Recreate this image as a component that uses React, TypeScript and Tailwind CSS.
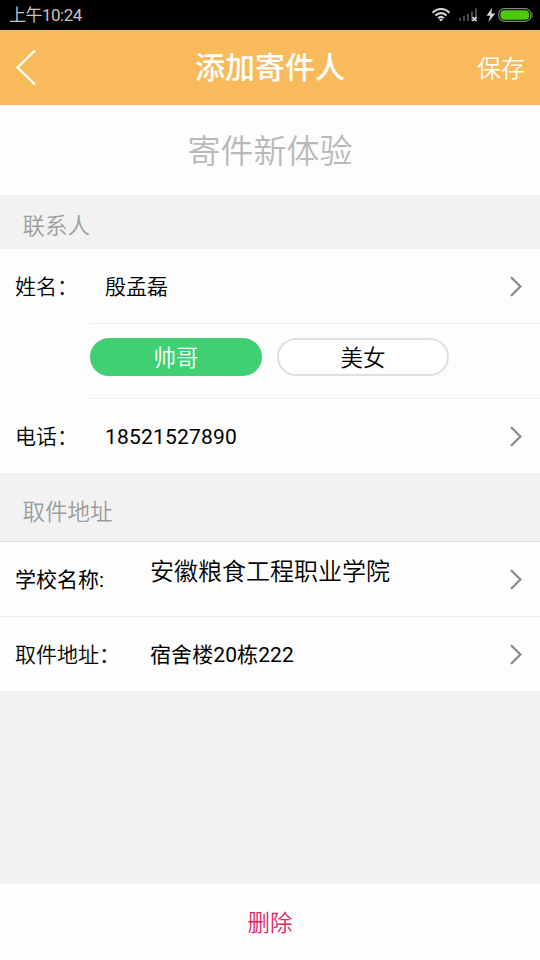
import React, { useState } from "react";

type RowProps = {
  label: string;
  labelClass: string;
  children: React.ReactNode;
};

const Chevron = () => (
  <svg className="h-[22px] w-3.5 shrink-0" viewBox="0 0 14 22" fill="none">
    <path d="M2.6 2.8 11.4 11.5 2.6 20.2" stroke="#8b8b8b" strokeWidth="2.3" strokeLinecap="round" />
  </svg>
);

const StatusBar = () => (
  <div className="flex h-[30px] shrink-0 items-center justify-between bg-black pl-[9px] pr-[6px]">
    <span className="text-[17px] font-normal leading-none tracking-[-0.5px] text-[#c4c4c4]">上午10:24</span>
    <div className="flex h-full items-center">
      {/* wifi */}
      <svg className="h-[30px] w-[22px]" viewBox="0 0 22 30" fill="none" stroke="#d6d6d6" strokeWidth="2.1">
        <path d="M1.6 12.8C6.5 7.8 13.7 7.8 18.4 12.8" />
        <path d="M4.4 15.6C7.7 12.3 12.5 12.3 15.6 15.6" />
        <path d="M7.2 18.2C8.9 16.6 11.2 16.6 12.8 18.2" />
        <path d="M8 19.6C9.2 18.5 10.8 18.5 12 19.6L10 21.6Z" fill="#d6d6d6" stroke="none" />
      </svg>
      {/* no signal */}
      <svg className="ml-1.5 h-[30px] w-[22px]" viewBox="0 0 22 30">
        <path d="M0 18h2v3H0zM4 16h2v5H4zM8 14h2v7H8zM12 11.5h2V21h-2zM16 8.5h2V21h-2z" fill="#4b4b4b" />
        <path d="m13.4 17 4 4m0-4-4 4" stroke="#e6e6e6" strokeWidth="1.5" />
      </svg>
      {/* charging */}
      <svg className="ml-[5px] h-[30px] w-[10px]" viewBox="0 0 10 30">
        <path d="M6.2 7.8.6 15.8h3.6l-1.9 6.4L9.2 13.4H5.3z" fill="#d9d9d9" />
      </svg>
      <svg className="ml-[2px] h-[30px] w-9" viewBox="0 0 36 30">
        <rect x="0.7" y="8.7" width="32.2" height="12.6" rx="5.5" fill="none" stroke="#828282" strokeWidth="1.2" />
        <rect x="2.4" y="10.3" width="28.8" height="9.4" rx="4" fill="#4dc80d" />
        <path d="M34 12.6v4.8" stroke="#777" strokeWidth="1.2" />
      </svg>
    </div>
  </div>
);

const Row = ({ label, labelClass, children }: RowProps) => (
  <div className="flex h-[74px] shrink-0 items-center bg-[#fdfdfd] pl-[15px] pr-[17px]">
    <span className={labelClass}>{label}</span>
    <div className="flex-1">{children}</div>
    <Chevron />
  </div>
);

const App = () => {
  const [gender, setGender] = useState("male");

  const active = "border-[#40d073] bg-[#40d073] text-white";
  const inactive = "border-[#e0e0e0] bg-white text-black";

  return (
    <div className="flex h-[960px] w-[540px] flex-col overflow-hidden bg-[#f2f2f2] font-[Roboto,'Noto_Sans_CJK_SC',sans-serif] font-[350] text-black" lang="zh-CN">
      <StatusBar />

      <header className="grid h-[75px] shrink-0 grid-cols-3 items-center bg-[#f9ba5b] px-[15px] text-white">
        <button>
          <svg className="h-[38px] w-[22px]" viewBox="0 0 22 38" fill="none">
            <path d="M20 1.5 2.5 18.5 20 35.5" stroke="white" strokeWidth="2.3" />
          </svg>
        </button>
        <h1 className="text-center text-[30px] font-medium leading-none">添加寄件人</h1>
        <button className="pt-0.5 text-right text-2xl leading-none">保存</button>
      </header>

      <div className="flex h-[90px] shrink-0 items-center justify-center bg-[#fdfdfd] pt-[3px] text-[33px] leading-none text-[#b9b9b9]">
        寄件新体验
      </div>

      <div className="flex h-[54px] shrink-0 items-center pl-[22.5px] pt-2 text-[22.5px] leading-none text-[#9c9c9c]">
        联系人
      </div>
      <Row label="姓名：" labelClass="w-[90px] pt-0.5 text-[21px] leading-none">
        <div className="pt-0.5 text-[21px] leading-none">殷孟磊</div>
      </Row>
      <div className="flex h-[76px] shrink-0 bg-[#fdfdfd] pl-[90px]">
        <div className="flex flex-1 gap-[15px] border-y border-[#eeeeee] pt-3.5">
          <button
            className={`h-[38px] w-[172px] rounded-full border-2 pt-0.5 text-[22.5px] leading-none ${gender === "male" ? active : inactive}`}
            onClick={() => setGender("male")}
          >
            帅哥
          </button>
          <button
            className={`h-[38px] w-[172px] rounded-full border-2 pt-0.5 text-[22.5px] leading-none ${gender === "female" ? active : inactive}`}
            onClick={() => setGender("female")}
          >
            美女
          </button>
        </div>
      </div>
      <Row label="电话：" labelClass="w-[90px] pt-0.5 text-[21px] leading-none">
        <div className="pt-0.5 text-[21px] font-normal leading-none tracking-[0.2px]">18521527890</div>
      </Row>

      <div className="flex h-[69px] shrink-0 items-center border-b border-[#dedede] pl-[22.5px] pt-2.5 text-[22.5px] leading-none text-[#9c9c9c]">
        取件地址
      </div>
      <Row label="学校名称:" labelClass="w-[135px] pt-0.5 text-[21px] font-normal leading-none">
        <div className="pb-3.5 text-2xl leading-none">安徽粮食工程职业学院</div>
      </Row>
      <div className="border-t border-[#ececec]">
        <Row label="取件地址：" labelClass="w-[135px] pt-0.5 text-[21px] leading-none">
          <div className="pt-0.5 text-[21px] font-normal leading-none tracking-[0.1px]">宿舍楼20栋222</div>
        </Row>
      </div>

      <button className="mt-auto h-[76px] shrink-0 bg-[#fefefe] pt-0.5 text-[22.5px] leading-none text-[#e0245e]">
        删除
      </button>
    </div>
  );
};

export default App;
